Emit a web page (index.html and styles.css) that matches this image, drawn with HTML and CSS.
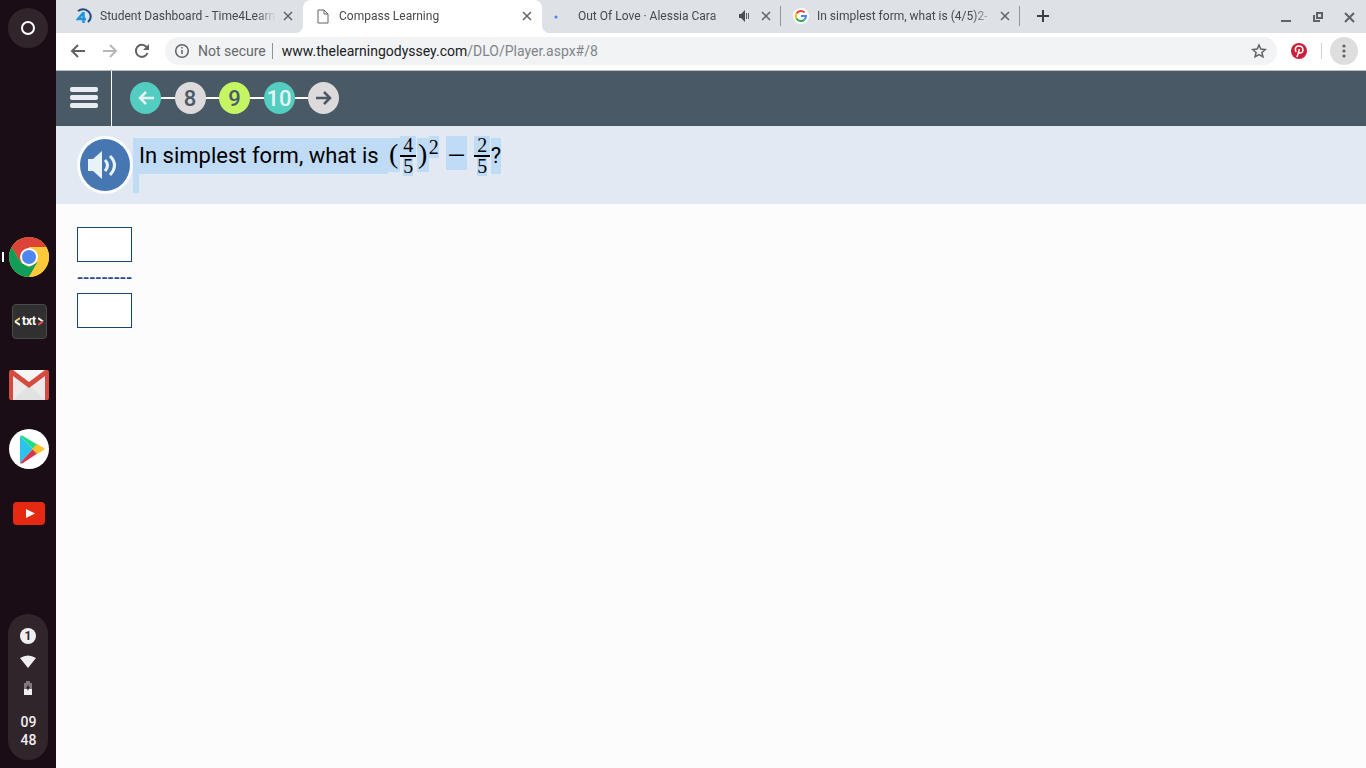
FILE: index.html
```html
<!DOCTYPE html>
<html lang="en">
<head>
    <meta charset="UTF-8">
    <meta name="viewport" content="width=device-width, initial-scale=1.0">
    <title>Compass Learning</title>
    <link rel="stylesheet" href="styles.css">
</head>
<body>

<div class="shelf">
    <button class="launcher" aria-label="Launcher"><span class="ring"></span></button>

    <div class="apps">
        <button class="app active" aria-label="Chrome">
            <svg width="40" height="40" viewBox="0 0 40 40">
                <circle cx="20" cy="20" r="20" fill="#fdc93b"/>
                <path d="M20 20L11.300 25 2.700 10A20 20 0 0 1 37.300 10H20z" fill="#db4437"/>
                <path d="M2.700 10L11.300 25 20 30 28.700 25 20 40A20 20 0 0 1 2.700 10z" fill="#0f9d58"/>
                <path d="M20 10H37.300A20 20 0 0 1 20 40L28.700 25z" fill="#fdc93b"/>
                <circle cx="20" cy="20" r="9" fill="#fff"/>
                <circle cx="20" cy="20" r="7" fill="#4c86ee"/>
            </svg>
        </button>
        <button class="app" aria-label="Text editor">
            <span class="txt-icon"><svg width="6" height="9" viewBox="0 0 6 9"><path d="M6 1L1 4.500" stroke="#f4c568"/><path d="M1 4.500L6 8" stroke="#fff"/></svg><b>txt</b><svg width="6" height="9" viewBox="0 0 6 9"><path d="M0 1l5 3.500" stroke="#fff"/><path d="M5 4.500L0 8" stroke="#e45548"/></svg></span>
        </button>
        <button class="app" aria-label="Gmail">
            <svg width="40" height="40" viewBox="0 0 40 40">
                <rect x="1" y="5" width="38" height="30" rx="2" fill="#eceaea"/>
                <path d="M4 35L20 20 36 35z" fill="#e2e2e2"/>
                <path d="M4 8L20 22 36 8V5H4z" fill="#f7f6f6"/>
                <path d="M0 7a2 2 0 0 1 2-2h2l16 12L36 5h2a2 2 0 0 1 2 2v26a2 2 0 0 1-2 2h-2V11L20 23 4 11v24H2a2 2 0 0 1-2-2z" fill="#d54b3f"/>
            </svg>
        </button>
        <button class="app" aria-label="Play Store">
            <svg width="40" height="40" viewBox="0 0 40 40">
                <circle cx="20" cy="20" r="20" fill="#fff"/>
                <path d="M11 7L24 20 11 34z" fill="#2bc4e8"/>
                <path d="M11 7q1-1 3 0l15 9-5 4z" fill="#1fdc86"/>
                <path d="M11 34q1 1 3 0l15-10-5-4z" fill="#d9344c"/>
                <path d="M28 15l7 4q1 1 0 2l-7 4-5-5z" fill="#f8c331"/>
            </svg>
        </button>
        <button class="app" aria-label="YouTube">
            <svg width="40" height="40" viewBox="0 0 40 40">
                <rect x="4" y="9" width="32" height="23" rx="4" fill="#e62a12"/>
                <path d="M17 16l9 4.500-9 4.500z" fill="#fff"/>
            </svg>
        </button>
    </div>

    <div class="tray">
        <span class="badge">1</span>
        <svg width="16" height="16" viewBox="0 0 16 16"><path d="M0 4Q8-1 16 4L8 14z" fill="#f1eef0"/></svg>
        <svg width="16" height="16" viewBox="0 0 16 16">
            <path d="M4 3h2V1h4v2h2v6H4z" fill="#85797f"/>
            <path d="M4 9h8v6H4z" fill="#f1eef0"/>
            <path d="M8.500 4L6 8.500h1.500V11L10 7H8.500z" fill="#2e2228"/>
        </svg>
        <div class="clock">09<br>48</div>
    </div>
</div>

<div class="window">
    <div class="tabstrip">
        <div class="tab">
            <svg class="favicon" viewBox="0 0 16 16">
                <path d="M2 3Q8-1 13 4q4 5-1 10" fill="none" stroke="#1c4a86" stroke-width="2"/>
                <path d="M7.500 4.500L2 11h8M7.500 4v11" fill="none" stroke="#1e96d8" stroke-width="2.500"/>
            </svg>
            <span class="tab-title">Student Dashboard - Time4Learn</span>
            <button class="icon-button close" aria-label="Close tab"><svg width="16" height="16" viewBox="0 0 16 16"><path d="M4 4l8 8M12 4l-8 8"/></svg></button>
        </div>
        <div class="tab current">
            <svg class="favicon" viewBox="0 0 16 16"><path d="M3 2h6l4 4v9H3zM9 2v4h4" fill="none" stroke="#5f6368"/></svg>
            <span class="tab-title">Compass Learning</span>
            <button class="icon-button close" aria-label="Close tab"><svg width="16" height="16" viewBox="0 0 16 16"><path d="M4 4l8 8M12 4l-8 8"/></svg></button>
        </div>
        <div class="tab divided">
            <svg class="favicon" viewBox="0 0 16 16"><circle cx="2" cy="9" r="1.500" fill="#4285f4"/></svg>
            <span class="tab-title">Out Of Love · Alessia Cara</span>
            <svg class="audio" width="16" height="16" viewBox="0 0 16 16"><path d="M3 6h2l4-4v12l-4-4H3z" fill="#4a4d51"/><path d="M10.500 5v6M12.500 5v6" stroke="#5f6368"/></svg>
            <button class="icon-button close" aria-label="Close tab"><svg width="16" height="16" viewBox="0 0 16 16"><path d="M4 4l8 8M12 4l-8 8"/></svg></button>
        </div>
        <div class="tab divided">
            <svg class="favicon" viewBox="0 0 16 16">
                <circle cx="8" cy="8" r="8" fill="#fff"/>
                <g fill="none" stroke-width="2">
                    <path d="M3.500 5.500A5 5 0 0 1 11.500 4.500" stroke="#ea4335"/>
                    <path d="M3.500 5.500a5 5 0 0 0 0 5" stroke="#fbbc05"/>
                    <path d="M3.500 10.500a5 5 0 0 0 8 1" stroke="#34a853"/>
                    <path d="M11.500 11.500A5 5 0 0 0 13 8H8" stroke="#4285f4"/>
                </g>
            </svg>
            <span class="tab-title">In simplest form, what is (4/5)2-</span>
            <button class="icon-button close" aria-label="Close tab"><svg width="16" height="16" viewBox="0 0 16 16"><path d="M4 4l8 8M12 4l-8 8"/></svg></button>
        </div>
        <button class="icon-button new-tab" aria-label="New tab"><svg width="16" height="16" viewBox="0 0 16 16"><path d="M8 2v12M2 8h12"/></svg></button>
        <div class="window-controls">
            <button class="icon-button" aria-label="Minimize"><svg width="16" height="16" viewBox="0 0 16 16"><path d="M3 12h10"/></svg></button>
            <button class="icon-button" aria-label="Restore"><svg width="16" height="16" viewBox="0 0 16 16"><path d="M7 4h5v5H7zM4 6v6h6"/></svg></button>
            <button class="icon-button" aria-label="Close"><svg width="16" height="16" viewBox="0 0 16 16"><path d="M3 4l9 9M12 4l-9 9"/></svg></button>
        </div>
    </div>

    <div class="toolbar">
        <button class="icon-button" aria-label="Back"><svg width="16" height="16" viewBox="0 0 16 16"><path d="M15 8H2M8 2L2 8l6 6"/></svg></button>
        <button class="icon-button dim" aria-label="Forward"><svg width="16" height="16" viewBox="0 0 16 16"><path d="M1 8h13M8 2l6 6-6 6"/></svg></button>
        <button class="icon-button" aria-label="Reload"><svg width="16" height="16" viewBox="0 0 16 16"><path d="M13.500 10A6 6 0 1 1 12.500 4"/><path d="M15 1v6H9z" class="solid"/></svg></button>
        <div class="omnibox">
            <svg width="16" height="16" viewBox="0 0 16 16"><g fill="none" stroke="#5f6368" stroke-width="1.500"><circle cx="8" cy="8" r="6.300"/><path d="M8 7v4M8 4v1.500"/></g></svg>
            <span class="security">Not secure</span>
            <span class="url"><span class="host">www.thelearningodyssey.com</span>/DLO/Player.aspx#/8</span>
            <button class="icon-button" aria-label="Bookmark"><svg width="16" height="16" viewBox="0 0 16 16"><path class="thin" d="M8 2l1.800 4.100 4.500.4-3.400 3 1 4.300L8 11.500l-3.900 2.300 1-4.300-3.400-3 4.500-.4z"/></svg></button>
        </div>
        <button class="icon-button pinterest" aria-label="Pinterest">
            <svg width="16" height="16" viewBox="0 0 16 16"><circle cx="8" cy="8" r="8" class="pin"/><path d="M5 9C3 4 6 3 8 3c5 0 5 7 1.500 7C8 10 7.500 9 7.500 9M8.500 6L6 14" class="pin-mark"/></svg>
        </button>
        <span class="separator"></span>
        <button class="menu" aria-label="Menu"><svg width="16" height="16" viewBox="0 0 16 16" fill="#5f6368"><circle cx="8" cy="3" r="1.600"/><circle cx="8" cy="8" r="1.600"/><circle cx="8" cy="13" r="1.600"/></svg></button>
    </div>

    <div class="lesson-bar">
        <button class="hamburger" aria-label="Lesson menu"><span></span><span></span><span></span></button>
        <div class="steps">
            <button class="step teal" aria-label="Previous"><svg width="18" height="18" viewBox="0 0 18 18"><path d="M17 9H3M9 3L3 9l6 6"/></svg></button>
            <i></i>
            <button class="step">8</button>
            <i></i>
            <button class="step lime">9</button>
            <i></i>
            <button class="step teal">10</button>
            <i></i>
            <button class="step" aria-label="Next"><svg width="18" height="18" viewBox="0 0 18 18"><path d="M1 9h14M9 3l6 6-6 6"/></svg></button>
        </div>
    </div>

    <div class="question">
        <button class="speak" aria-label="Read aloud">
            <svg width="36" height="36" viewBox="0 0 36 36">
                <path d="M3 12h5l9-8v28l-9-8H3z" fill="#e8f3f7"/>
                <g fill="none" stroke="#e8f3f7" stroke-width="3"><path d="M20 13q5 5 0 11M25 9q9 9 0 19"/></g>
            </svg>
        </button>
        <div class="prompt">
            <div class="line">
                <span class="marked words">In simplest form, what is</span>
                <span class="marked paren">(</span>
                <span class="fraction"><span class="marked">4</span><span class="marked">5</span></span>
                <span class="marked paren">)</span>
                <span class="marked power">2</span>
                <span class="marked minus">−</span>
                <span class="fraction"><span class="marked">2</span><span class="marked">5</span></span>
                <span class="marked">?</span>
            </div>
            <div class="marked tail"></div>
        </div>
    </div>

    <div class="answer">
        <input type="text" aria-label="Numerator">
        <div class="dashes">---------</div>
        <input type="text" aria-label="Denominator">
    </div>
</div>

</body>
</html>
```
FILE: styles.css
```css
* {
    box-sizing: border-box;
}

body {
    margin: 0;
    display: flex;
    min-height: 100vh;
    font-family: Roboto, "Liberation Sans", sans-serif;
    background-color: #fcfcfc;
}

button {
    padding: 0;
    border: none;
    background: none;
    font-family: inherit;
    cursor: pointer;
}

svg {
    display: block;
}

/* Shelf */
.shelf {
    width: 56px;
    flex-shrink: 0;
    padding: 8px;
    display: flex;
    flex-direction: column;
    justify-content: space-between;
    background-color: #1b0d16;
}

.launcher {
    display: flex;
    align-items: center;
    justify-content: center;
    width: 40px;
    height: 40px;
    border-radius: 50%;
    background-color: #31252c;
}

.ring {
    width: 14px;
    height: 14px;
    border: 2px solid #fff;
    border-radius: 50%;
}

.apps {
    display: flex;
    flex-direction: column;
    gap: 24px;
    padding-top: 108px;
    margin: 0 -1px 0 1px;
}

.app {
    position: relative;
    width: 40px;
    height: 40px;
}

.app.active::before {
    content: "";
    position: absolute;
    left: -7px;
    top: 15px;
    width: 2px;
    height: 10px;
    background-color: #fff;
}

.txt-icon {
    display: flex;
    align-items: center;
    justify-content: center;
    gap: 2px;
    width: 35px;
    height: 35px;
    margin: 0 auto;
    border: 1px solid #4b4b4b;
    border-radius: 4px;
    background-color: #303030;
    color: #fff;
    font-size: 12px;
}

.txt-icon svg {
    fill: none;
    stroke-width: 2;
}

.tray {
    display: flex;
    flex-direction: column;
    align-items: center;
    gap: 10px;
    height: 146px;
    padding-top: 14px;
    border-radius: 20px;
    background-color: #31252c;
}

.badge {
    width: 16px;
    height: 16px;
    border-radius: 50%;
    background-color: #f1eef0;
    color: #31252c;
    font-size: 12px;
    font-weight: bold;
    line-height: 16px;
    text-align: center;
}

.clock {
    padding: 7px 0 0 1px;
    color: #f1eef0;
    font-size: 14px;
    font-weight: 500;
    line-height: 18px;
}

/* Browser */
.window {
    flex: 1;
    min-width: 0;
}

.icon-button {
    flex-shrink: 0;
}

.icon-button svg {
    fill: none;
    stroke: #5f6368;
    stroke-width: 2;
}

.icon-button.dim svg {
    stroke: #b5b7b9;
}

.icon-button .solid {
    fill: #5f6368;
    stroke: none;
}

.icon-button .thin,
.icon-button.close svg {
    stroke-width: 1.5;
}

.icon-button .pin {
    fill: #cb1f37;
    stroke: none;
}

.icon-button .pin-mark {
    stroke: #fff;
    stroke-width: 1.5;
}

.tabstrip {
    display: flex;
    align-items: center;
    height: 33px;
    padding-left: 8px;
    background-color: #dee1e6;
}

.tab {
    display: flex;
    align-items: center;
    flex: 0 1 239px;
    min-width: 0;
    height: 33px;
    padding: 0 7px 2px 12px;
    position: relative;
    color: #45484c;
    font-size: 12px;
}

.tab.current {
    border-radius: 8px 8px 0 0;
    background-color: #fff;
}

.tab.current::before,
.tab.current::after {
    content: "";
    position: absolute;
    bottom: 0;
    width: 8px;
    height: 8px;
}

.tab.current::before {
    left: -8px;
    background: radial-gradient(circle at 0 0, transparent 8px, #fff 8px);
}

.tab.current::after {
    right: -8px;
    background: radial-gradient(circle at 100% 0, transparent 8px, #fff 8px);
}

.tab.divided::after {
    content: "";
    position: absolute;
    right: 0;
    top: 6px;
    width: 1px;
    height: 20px;
    background-color: #929599;
}

.favicon {
    flex-shrink: 0;
    width: 16px;
    height: 16px;
    margin-right: 8px;
}

.tab-title {
    flex: 1;
    min-width: 0;
    margin-right: 4px;
    overflow: hidden;
    white-space: nowrap;
    -webkit-mask-image: linear-gradient(to left, transparent, #000 20px);
    mask-image: linear-gradient(to left, transparent, #000 20px);
}

.audio {
    margin-right: 6px;
}

.new-tab {
    margin-left: 15px;
    padding-bottom: 2px;
}

.new-tab svg {
    stroke: #3c4043;
}

.window-controls {
    display: flex;
    gap: 16px;
    margin-left: auto;
    padding-right: 8px;
}

.toolbar {
    display: flex;
    align-items: center;
    gap: 16px;
    height: 38px;
    padding: 0 8px 1px 14px;
    border-bottom: 1px solid #b9bdc0;
    background-color: #fff;
}

.omnibox {
    flex: 1;
    display: flex;
    align-items: center;
    height: 28px;
    margin-left: -1px;
    padding: 0 10px 0 9px;
    border-radius: 14px;
    background-color: #f1f3f4;
    color: #808489;
    font-size: 14px;
}

.security {
    margin: 0 9px 0 8px;
    padding-right: 6px;
    border-right: 1px solid #909396;
    color: #66696d;
}

.url {
    flex: 1;
}

.host {
    color: #202124;
}

.pinterest {
    margin-left: -2px;
}

.separator {
    width: 1px;
    height: 16px;
    margin: 0 -8px 0 -2px;
    background-color: #d0d2d5;
}

.menu {
    display: flex;
    align-items: center;
    justify-content: center;
    width: 28px;
    height: 28px;
    border-radius: 50%;
    background-color: #dedede;
}

/* Lesson */
.lesson-bar {
    display: flex;
    height: 55px;
    background-color: #495965;
}

.hamburger {
    display: flex;
    flex-direction: column;
    align-items: center;
    justify-content: center;
    gap: 3px;
    width: 56px;
    padding-bottom: 2px;
    border-right: 1px solid #fff;
}

.hamburger span {
    width: 28px;
    height: 5px;
    border-radius: 2px;
    background-color: #e9edf2;
}

.steps {
    display: flex;
    align-items: center;
    width: 209px;
    margin-left: 18px;
    padding-bottom: 1px;
}

.steps i {
    flex: 1;
    height: 2px;
    background-color: #fff;
}

.step {
    display: flex;
    align-items: center;
    justify-content: center;
    width: 31px;
    height: 32px;
    border-radius: 50%;
    background-color: #dcdadb;
    color: #495965;
    font-size: 22px;
    font-weight: 500;
}

.step svg {
    fill: none;
    stroke: currentColor;
    stroke-width: 2.5;
}

.step.teal {
    background-color: #52cdbf;
    color: #e6f3f3;
}

.step.lime {
    background-color: #c6f564;
}

.question {
    display: flex;
    min-height: 78px;
    padding: 10px 21px;
    background-color: #e2e9f3;
}

.speak {
    display: flex;
    align-items: center;
    justify-content: center;
    flex-shrink: 0;
    width: 56px;
    height: 58px;
    padding-right: 4px;
    border: 3px solid #fafdff;
    border-radius: 50%;
    background-color: #4677b2;
}

.prompt {
    color: #000;
    font-size: 22px;
}

.line {
    display: flex;
    align-items: flex-start;
    height: 38px;
    line-height: 36px;
}

.line > .marked {
    margin-top: 2px;
}

.marked {
    background-color: #c0dbf6;
}

.words {
    padding: 0 9px 0 6px;
}

.line .paren,
.line .power,
.line .minus,
.fraction {
    font-family: "Liberation Serif", serif;
}

.line .paren {
    width: 12px;
    height: 34px;
    font-size: 28px;
    line-height: 32px;
    text-align: center;
}

.fraction {
    display: flex;
    flex-direction: column;
    align-items: center;
    width: 17px;
    font-size: 20px;
    line-height: 19px;
}

.fraction .marked:first-child {
    border-bottom: 2px solid #000;
    padding: 0 3px;
}

.line .power {
    height: 22px;
    margin-top: 0;
    font-size: 20px;
    line-height: 22px;
}

.line .minus {
    width: 21px;
    height: 34px;
    margin: 0 7px;
    font-size: 32px;
    line-height: 38px;
    text-align: center;
}

.tail {
    width: 6px;
    height: 19px;
}

.answer {
    padding: 23px 21px;
}

.answer input {
    display: block;
    width: 55px;
    height: 35px;
    padding: 4px;
    border: 1px solid #1d4370;
    background-color: #fff;
    font-size: 18px;
}

.dashes {
    padding-top: 1px;
    color: #2c4a92;
    font-size: 18px;
    font-weight: 500;
    line-height: 30px;
}
```
